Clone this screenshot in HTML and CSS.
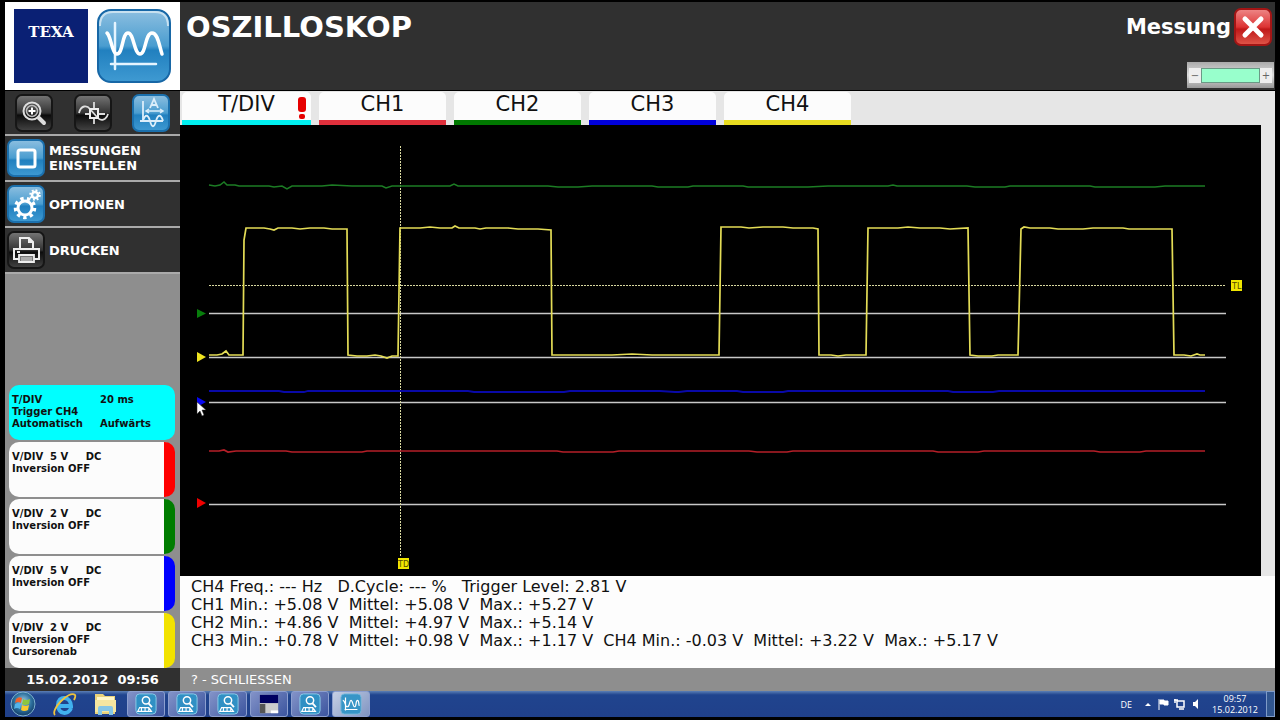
FILE: index.html
```
<!DOCTYPE html>
<html lang="de">
<head>
<meta charset="utf-8">
<title>Oszilloskop</title>
<link rel="stylesheet" href="styles.css">
</head>
<body>
<svg class="defs" aria-hidden="true">
  <defs>
    <linearGradient id="blue" x1="0" y1="0" x2="0" y2="1">
      <stop offset="0" stop-color="#8dbfe0"/><stop offset=".5" stop-color="#4a9dd0"/><stop offset=".56" stop-color="#2180bf"/><stop offset="1" stop-color="#3f9ad2"/>
    </linearGradient>
    <linearGradient id="dark" x1="0" y1="0" x2="0" y2="1">
      <stop offset="0" stop-color="#777"/><stop offset=".5" stop-color="#333"/><stop offset=".56" stop-color="#0c0c0c"/><stop offset="1" stop-color="#444"/>
    </linearGradient>
    <linearGradient id="red" x1="0" y1="0" x2="0" y2="1">
      <stop offset="0" stop-color="#e88"/><stop offset=".5" stop-color="#d33"/><stop offset=".56" stop-color="#c01818"/><stop offset="1" stop-color="#e0574a"/>
    </linearGradient>
    <radialGradient id="orb" cx=".5" cy=".4" r=".6">
      <stop offset="0" stop-color="#9fd0e8"/><stop offset=".6" stop-color="#2c6f9c"/><stop offset="1" stop-color="#123a66"/>
    </radialGradient>
    <symbol id="measure" viewBox="0 0 24 24">
      <rect x="1" y="1" width="22" height="22" rx="4" fill="#3090c4" stroke="#8fd0ea"/>
      <circle cx="12" cy="8" r="4" fill="none" stroke="#fff" stroke-width="1.6"/>
      <path d="M14.5 11l4 4.5" stroke="#fff" stroke-width="2"/>
      <path d="M5 16h10l3 4H3zM7 16v4M11 16v4M15 16v4" fill="none" stroke="#fff" stroke-width="1.2"/>
    </symbol>
  </defs>
</svg>
<div class="app">
  <header class="header">
    <div class="brand">
      <div class="logo">TEXA</div>
      <svg class="app-icon" viewBox="0 0 74 74" aria-hidden="true">
        <rect x="1" y="1" width="72" height="72" rx="13" fill="url(#blue)" stroke="#1767a6" stroke-width="2"/>
        <path d="M3 17Q3 3 16 3H58Q71 3 71 17" fill="none" stroke="#c8e1f0" stroke-width="2"/>
        <path d="M18 14v46M14 55h45" stroke="#e4f4ff" stroke-width="2.500" stroke-linecap="round"/>
        <path d="M10 24C14 27 15 45 20 45C26 45 25 24 31 24C37 24 37 45 43 45C49 45 48 24 55 24C61 24 62 36 65 45" fill="none" stroke="#fff" stroke-width="3.500" stroke-linecap="round"/>
      </svg>
    </div>
    <h1 class="title">OSZILLOSKOP</h1>
    <div class="header-side">
      <div class="mode">
        <span>Messung</span>
        <button class="icon-button" aria-label="Schließen">
          <svg viewBox="0 0 38 38"><rect x="1" y="1" width="36" height="36" rx="6" fill="url(#red)" stroke="#a31515" stroke-width="2"/><path d="M11 11l16 16M27 11L11 27" stroke="#fff" stroke-width="5" stroke-linecap="round"/></svg>
        </button>
      </div>
      <div class="level">
        <button class="step" aria-label="Weniger">−</button>
        <div class="level-bar"></div>
        <button class="step" aria-label="Mehr">+</button>
      </div>
    </div>
  </header>

  <div class="main">
    <aside class="sidebar">
      <div class="tools">
        <button class="icon-button" aria-label="Zoom">
          <svg viewBox="0 0 38 38"><rect x="1" y="1" width="36" height="36" rx="6" fill="url(#dark)" stroke="#161616" stroke-width="2"/><circle cx="17" cy="17" r="8.500" fill="none" stroke="#ddd" stroke-width="2"/><circle cx="17" cy="17" r="5.500" fill="none" stroke="#bbb" stroke-width="1.500"/><path d="M17 13.500v7M13.500 17h7" stroke="#fff" stroke-width="2"/><path d="M24 24l5 5" stroke="#ddd" stroke-width="4" stroke-linecap="round"/></svg>
        </button>
        <button class="icon-button" aria-label="Signal">
          <svg viewBox="0 0 38 38"><rect x="1" y="1" width="36" height="36" rx="6" fill="url(#dark)" stroke="#161616" stroke-width="2"/><path d="M5 19C7 11 13 11 16 15L23 23C27 28 32 26 34 20M20 8v7M20 24v6M11 20h5M25 20h6" fill="none" stroke="#ddd" stroke-width="1.800"/><rect x="16" y="15" width="8" height="9" fill="none" stroke="#eee" stroke-width="2"/></svg>
        </button>
        <button class="icon-button" aria-label="Automatik">
          <svg viewBox="0 0 38 38"><rect x="1" y="1" width="36" height="36" rx="6" fill="url(#blue)" stroke="#1b70ad" stroke-width="2"/><path d="M11 7v21M8 27h23M18 14l4-9 4 9M19.500 11h5" fill="none" stroke="#dceefa" stroke-width="1.800"/><path d="M15 17h15M17 15l-3 2 3 2M28 15l3 2-3 2" fill="none" stroke="#dceefa" stroke-width="1.500"/><path d="M11 27C13 20 16 20 18 27S22 34 24 27 29 20 31 27" fill="none" stroke="#dceefa" stroke-width="1.800"/></svg>
        </button>
      </div>
      <nav class="menu">
        <button class="menu-item">
          <svg viewBox="0 0 38 38"><rect x="1" y="1" width="36" height="36" rx="6" fill="url(#blue)" stroke="#1b70ad" stroke-width="2"/><rect x="11" y="11" width="17" height="17" rx="2" fill="none" stroke="#fff" stroke-width="3"/></svg>
          <span>MESSUNGEN<br>EINSTELLEN</span>
        </button>
        <button class="menu-item">
          <svg viewBox="0 0 38 38"><rect x="1" y="1" width="36" height="36" rx="6" fill="url(#blue)" stroke="#1b70ad" stroke-width="2"/><circle cx="18" cy="23" r="7" fill="none" stroke="#fff" stroke-width="3"/><circle cx="18" cy="23" r="9.500" fill="none" stroke="#fff" stroke-width="3.500" stroke-dasharray="3.316 3.316"/><circle cx="28" cy="10" r="3" fill="none" stroke="#fff" stroke-width="2.500"/><circle cx="28" cy="10" r="4.800" fill="none" stroke="#fff" stroke-width="2" stroke-dasharray="1.880 1.880"/></svg>
          <span>OPTIONEN</span>
        </button>
        <button class="menu-item">
          <svg viewBox="0 0 38 38"><rect x="1" y="1" width="36" height="36" rx="6" fill="url(#dark)" stroke="#161616" stroke-width="2"/><path d="M13 17V7h9l4 4v6M22 7v4h4M12 28H7V18h25v10h-5M10 21h3" fill="none" stroke="#eee" stroke-width="2"/><path d="M12 24h15v7H12z" fill="#777" stroke="#eee" stroke-width="1.800"/><path d="M14 27h11M14 29h11" stroke="#ddd"/></svg>
          <span>DRUCKEN</span>
        </button>
      </nav>
      <div class="cards">
        <section class="card time"><span>T/DIV</span><span>20 ms</span><span>Trigger CH4</span><span></span><span>Automatisch</span><span>Aufwärts</span></section>
        <section class="card red"><p>V/DIV  5 V     DC</p><p>Inversion OFF</p></section>
        <section class="card green"><p>V/DIV  2 V     DC</p><p>Inversion OFF</p></section>
        <section class="card blue"><p>V/DIV  5 V     DC</p><p>Inversion OFF</p></section>
        <section class="card yellow"><p>V/DIV  2 V     DC</p><p>Inversion OFF</p><p>Cursorenab</p></section>
      </div>
    </aside>

    <main class="workspace">
      <div class="tabs">
        <button class="tab cyan">T/DIV<svg class="alert" viewBox="0 0 8 22" aria-hidden="true"><rect width="8" height="15" rx="3" fill="#e60000"/><rect x="1" y="17" width="6" height="5" rx="2" fill="#e60000"/></svg></button>
        <button class="tab red">CH1</button>
        <button class="tab green">CH2</button>
        <button class="tab blue">CH3</button>
        <button class="tab yellow">CH4</button>
      </div>
      <div class="scope">
        <svg viewBox="180 125 1081 451" role="img" aria-label="Signalverlauf">
          <g stroke="#c8c8c8" stroke-width="1.500"><path d="M209 313.500H1226M209 357.500H1226M209 402.500H1226M209 504.500H1226"/></g>
          <path d="M209 285.500H1226M400.500 146V556" stroke="#d9d9a0" stroke-dasharray="2 1" fill="none"/>
          <path d="M209 185l6 1 5-1 4-3 3 3 8 0 4 1h30l5 1 8-1 5 3 5-3h30l10-1 20 1h30l4 2 6-2h58l4-2 4 2h90l10 1h20l14-1h60l6 1h30l5-1h50l5 1h60l20-1h60l5-1 4 1h70l8 1h30l5-1h80l5 1h60l10-1h40" fill="none" stroke="#1c7c24" stroke-width="1.500"/>
          <path d="M209 355h8l5-1 4-3 3 4h14L244 240l2-12h18l6 1 4 1 4-2h14l8 1 10-1h14l8 1h15L348 355l9 1h10l8-1 6 1 6 2 5-2h6L400 228h20l10-1 10 1h12l3-2 4 2h16l5 1 6-1h22l10 1h20l13 1L552 355h60l20-1 20 1h67L721 227h20l8 1 14-1h20l10 1 20 0 5 1L819 355h12l7 1 8-1h20L868 228h30l10-1 12 1h20l10 1 18-1L970 355l8 1h14l6-1h20l3-126 3-2 6 1h20l8 1h25l10-1h30l6 1h15l28 0L1174 355h10l7 1 6-2 3 1h5" fill="none" stroke="#e3dc56" stroke-width="1.700"/>
          <path d="M209 391h70l5 1h20l4-1h160l6 1h90l6-1h90l15 1h4l8-1h50l6 1h40l5-1h160l5 1h40l6-1h206" fill="none" stroke="#0909a8" stroke-width="1.800"/>
          <path d="M209 451h10l5-1 4 2 8-1h50l6 1h70l5-1h190l6 1h50l6-1h130l8 1h30l6-1h140l5 1h40l6-1h110l6 1h40l6-1h59" fill="none" stroke="#b51f28" stroke-width="1.700"/>
          <path d="M197 309l9 4.500-9 4.500z" fill="#087d0c"/>
          <path d="M197 352l9 5-9 5z" fill="#efe420"/>
          <path d="M197 397l9 5-9 5z" fill="#0808f0"/>
          <path d="M197 498l9 5-9 5z" fill="#f00000"/>
          <g class="marker"><rect x="1231" y="280" width="11" height="11"/><text x="1232" y="289">TL</text><rect x="398" y="558" width="11" height="11"/><text x="398" y="567">TD</text></g>
          <path d="M197 402v12l3-3 2 5 2-1-2-5h4z" fill="#fff" stroke="#222" stroke-width=".500"/>
        </svg>
      </div>
      <div class="readout">
        <p>CH4 Freq.: --- Hz   D.Cycle: --- %   Trigger Level: 2.81 V</p>
        <p>CH1 Min.: +5.08 V  Mittel: +5.08 V  Max.: +5.27 V</p>
        <p>CH2 Min.: +4.86 V  Mittel: +4.97 V  Max.: +5.14 V</p>
        <p>CH3 Min.: +0.78 V  Mittel: +0.98 V  Max.: +1.17 V  CH4 Min.: -0.03 V  Mittel: +3.22 V  Max.: +5.17 V</p>
      </div>
    </main>
  </div>

  <div class="status">
    <div class="clock">15.02.2012  09:56</div>
    <div class="hint">? - SCHLIESSEN</div>
  </div>

  <footer class="taskbar">
    <div class="launchers">
      <button class="launch" aria-label="Start"><svg viewBox="0 0 26 26"><circle cx="13" cy="13" r="12" fill="url(#orb)" stroke="#7fb2cf"/><path d="M6 8q3-3 6-1l-1 5q-3-2-6 0z" fill="#f0612b"/><path d="M13 8q3 2 7 0l-1 5q-4 2-7 0z" fill="#8cc63f"/><path d="M5 13q3-2 6 0l-1 5q-3-2-6 0z" fill="#53b4ea"/><path d="M12 14q3 2 7 0l-1 5q-4 2-7 0z" fill="#fbc92e"/></svg></button>
      <button class="launch" aria-label="Internet Explorer"><svg viewBox="0 0 26 26"><path d="M20 17c-2 7-13 7-13-3s13-9 13 1H8" fill="none" stroke="#41b1ee" stroke-width="4"/><path d="M4 24C-1 19 18-1 24 4c1 1 0 3-1 5" fill="none" stroke="#f0c33c" stroke-width="1.800"/></svg></button>
      <button class="launch" aria-label="Explorer"><svg viewBox="0 0 26 26"><path d="M3 3h8l2 2h10v18H3z" fill="#e9d27b"/><path d="M5 6h17v3H5z" fill="#fff7c8"/><path d="M3 9h21v12H3z" fill="#f5e6a0"/><path d="M6 24v-7q0-2 2-2h11q2 0 2 2v7h-4v-4h-7v4z" fill="#85c6e6"/></svg></button>
    </div>
    <div class="tasks">
      <button class="task" aria-label="Diagnose 1"><svg viewBox="0 0 24 24"><use href="#measure"/></svg></button>
      <button class="task" aria-label="Diagnose 2"><svg viewBox="0 0 24 24"><use href="#measure"/></svg></button>
      <button class="task" aria-label="Diagnose 3"><svg viewBox="0 0 24 24"><use href="#measure"/></svg></button>
      <button class="task" aria-label="Fenster"><svg viewBox="0 0 24 24"><path d="M2 2h20v20H2z" fill="#ccc"/><path d="M2 2h20v9H2z" fill="#000060"/><path d="M2 12h6v10H2z" fill="#555"/><path d="M14 19h8v3h-8z" fill="#fff"/></svg></button>
      <button class="task" aria-label="Diagnose 4"><svg viewBox="0 0 24 24"><use href="#measure"/></svg></button>
      <button class="task active" aria-label="Oszilloskop"><svg viewBox="0 0 24 24"><rect x="1" y="1" width="22" height="22" rx="4" fill="#3795c7" stroke="#77b9dc"/><path d="M6 5v14M5 18h14M3 8c3 0 2 7 5 7s2-7 4-7 2 7 4 7 1-7 3-7 1 3 2 6" fill="none" stroke="#fff" stroke-width="1.300"/></svg></button>
    </div>
    <div class="tray">
      <span class="lang">DE</span>
      <svg class="tray-icons" viewBox="0 0 56 14" aria-hidden="true"><path d="M1 9l3-3 3 3z" fill="#fff"/><path d="M15 2v11M16 3h4v1h4v4h-4V7h-4z" fill="#fff" stroke="#fff"/><path d="M33 4h7v6h-7zM35 12h5M31 2v4M30 3h4" fill="none" stroke="#fff" stroke-width="1.500"/><path d="M49 5h2l3-3v10l-3-3h-2z" fill="#fff"/></svg>
      <div class="tray-clock"><span>09:57</span><span>15.02.2012</span></div>
      <button class="desktop" aria-label="Desktop anzeigen"></button>
    </div>
  </footer>
</div>
</body>
</html>
```
FILE: styles.css
```
* { box-sizing: border-box; }
body {
  margin: 0;
  background: #000;
  color: #111;
  font-family: "DejaVu Sans", Verdana, sans-serif;
}
p, h1 { margin: 0; }
p { white-space: pre; }
button {
  padding: 0;
  border: 0;
  background: none;
  color: inherit;
  font: inherit;
}
svg { display: block; }
.defs { position: absolute; width: 0; height: 0; }
.app {
  display: flex;
  flex-direction: column;
  min-height: 100vh;
  padding: 2px 5px 3px;
}

.header {
  display: flex;
  height: 88px;
  background: #303030;
}
.brand {
  display: flex;
  align-items: center;
  gap: 9px;
  flex: 0 0 175px;
  padding-left: 9px;
  background: #fff;
}
.logo {
  width: 74px;
  height: 74px;
  padding-top: 15px;
  background: #0a2074;
  color: #fff;
  font: bold 15px/16px "DejaVu Serif", serif;
  text-align: center;
}
.app-icon { width: 74px; height: 74px; }
.title {
  flex: 1;
  padding: 6px;
  color: #fff;
  font-size: 29px;
  line-height: 38px;
}
.header-side {
  display: flex;
  flex-direction: column;
  align-items: flex-end;
  justify-content: space-between;
  padding: 6px 1px 2px 0;
}
.mode {
  display: flex;
  align-items: center;
  gap: 3px;
  padding-right: 2px;
  color: #fff;
  font-size: 21px;
  font-weight: bold;
}
.icon-button, .icon-button svg { width: 38px; height: 38px; }
.level {
  display: flex;
  width: 87px;
  height: 26px;
  padding: 6px 2px 5px;
  background: linear-gradient(#aaa, #ddd 50%, #999);
}
.step {
  width: 12px;
  background: #eee;
  color: #666;
  font-size: 10px;
  line-height: 12px;
}
.level-bar {
  flex: 1;
  border: 1px solid #6a9a86;
  background: #98ffcc;
}

.main { display: flex; flex: 1; }
.sidebar {
  display: flex;
  flex: 0 0 175px;
  flex-direction: column;
  background: #8e8e8e;
}
.tools {
  display: flex;
  align-items: center;
  justify-content: space-between;
  height: 46px;
  padding: 0 10px;
  border-top: 1px solid #000;
  border-bottom: 2px solid #aaa;
  background: #303030;
}
.menu-item {
  display: flex;
  align-items: center;
  gap: 4px;
  width: 100%;
  height: 46px;
  padding-left: 2px;
  border-bottom: 2px solid #aaa;
  background: #303030;
  color: #fff;
  font-size: 13px;
  font-weight: bold;
  line-height: 15px;
  text-align: left;
}
.menu-item svg { flex: none; width: 38px; height: 38px; }
.cards {
  display: flex;
  flex-direction: column;
  gap: 2px;
  margin-top: auto;
  padding: 0 5px 0 4px;
  font-size: 10px;
  font-weight: bold;
  line-height: 12px;
}
.card {
  min-height: 55px;
  padding: 9px 0 0 3px;
  border-right: 11px solid;
  border-radius: 10px;
  background: #fcfcfc;
}
.card.time {
  display: grid;
  grid-template-columns: 88px 1fr;
  grid-auto-rows: 12px;
  border-right: 0;
  background: #0ff;
}
.card.red { border-right-color: #f00; }
.card.green { border-right-color: #007d00; }
.card.blue { border-right-color: #00f; }
.card.yellow { border-right-color: #f2e200; }

.workspace {
  display: flex;
  flex: 1;
  flex-direction: column;
  min-width: 0;
  border-top: 1px solid #000;
  background: #e6e6e6;
}
.tabs {
  display: flex;
  gap: 8px;
  padding: 1px 0 0 2px;
}
.tab {
  position: relative;
  width: 127px;
  height: 33px;
  padding-bottom: 4px;
  border-bottom: 5px solid;
  border-radius: 5px 5px 0 0;
  background: #fcfcfc;
  font-size: 21px;
  line-height: 24px;
}
.tab.cyan { width: 129px; border-bottom-color: #00f0f0; }
.tab.red { border-bottom-color: #e0303c; }
.tab.green { border-bottom-color: #007800; }
.tab.blue { border-bottom-color: #0000dc; }
.tab.yellow { border-bottom-color: #e8dc20; }
.alert {
  position: absolute;
  top: 5px;
  right: 5px;
  width: 8px;
  height: 22px;
}
.scope { margin-right: 14px; background: #000; }
.scope svg { width: 100%; }
.marker { font-size: 8px; fill: #f0e600; }
.marker text { fill: #554800; }
.readout {
  flex: 1;
  padding: 2px 11px 0;
  background: #fdfdfd;
  font-size: 16px;
  line-height: 18px;
}

.status {
  display: flex;
  height: 23px;
  color: #fff;
  font-size: 13px;
  line-height: 23px;
}
.clock {
  flex: 0 0 175px;
  background: #303030;
  font-weight: bold;
  text-align: center;
  white-space: pre;
}
.hint {
  flex: 1;
  padding-left: 11px;
  background: #8e8e8e;
}

.taskbar {
  display: flex;
  align-items: center;
  height: 26px;
  background: linear-gradient(#5b7fb5, #20448e 15%, #20408a);
}
.launchers {
  display: flex;
  gap: 15px;
  padding-left: 5px;
}
.launch, .launch svg { width: 26px; height: 26px; }
.tasks {
  display: flex;
  gap: 3px;
  padding-left: 9px;
}
.task {
  display: grid;
  place-items: center;
  width: 38px;
  height: 26px;
  border: 1px solid #8c9fcf;
  border-radius: 3px;
  background: linear-gradient(135deg, #8393c8, #3c559f);
}
.task.active { background: linear-gradient(135deg, #c5cfe4, #8095c2); }
.task svg { width: 22px; height: 22px; }
.tray {
  display: flex;
  align-items: center;
  gap: 12px;
  height: 100%;
  margin-left: auto;
  color: #fff;
  font-family: "Open Sans", sans-serif;
  font-size: 9px;
  line-height: 11px;
}
.tray-icons { width: 56px; height: 14px; }
.tray-clock {
  display: flex;
  flex-direction: column;
  align-items: center;
}
.desktop {
  width: 9px;
  height: 100%;
  margin-left: -4px;
  border: 1px solid #7f9bc8;
  background: #31568f;
}
```
